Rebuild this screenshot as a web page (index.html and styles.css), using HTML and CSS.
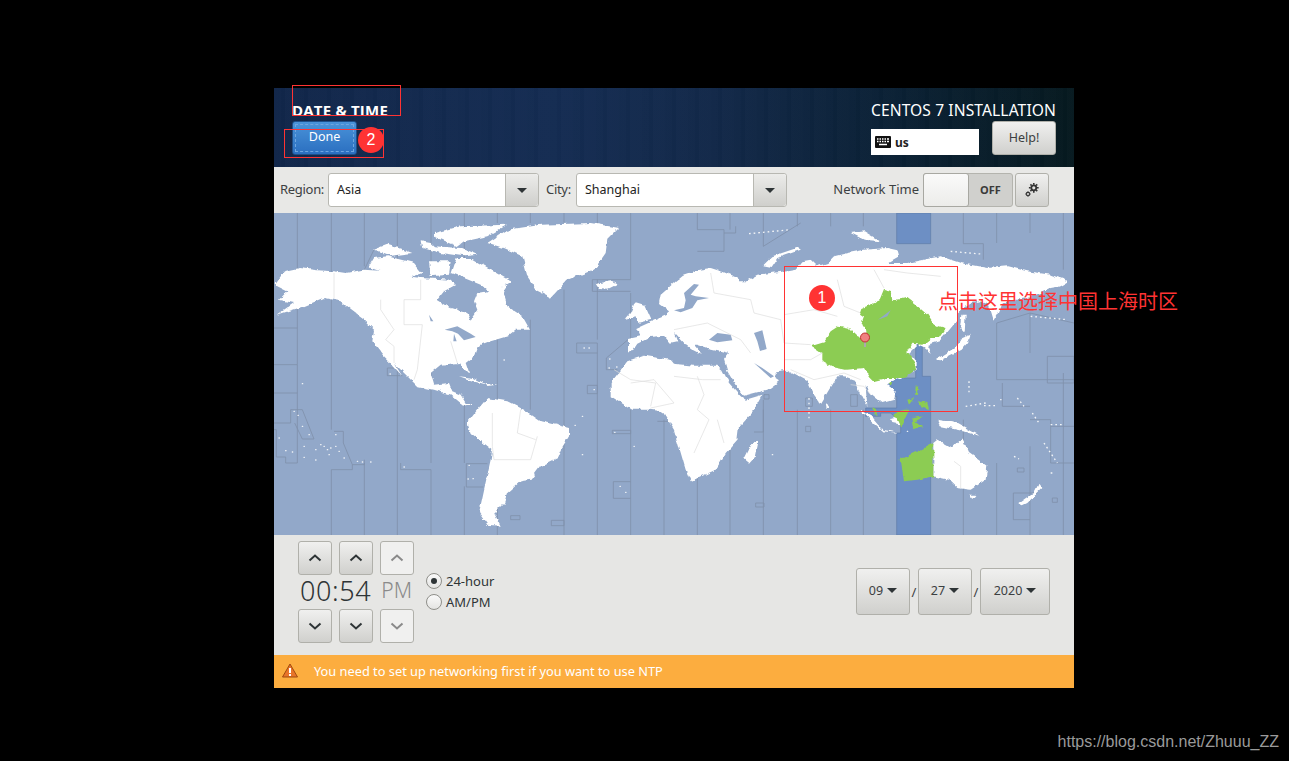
FILE: index.html
```html
<!DOCTYPE html>
<html lang="en">
<head>
<meta charset="utf-8">
<title>Date &amp; Time</title>
<link rel="stylesheet" href="styles.css">
</head>
<body>
<main class="window">
  <header class="hdr">
    <div class="hdr-left">
      <h1 class="hdr-title">DATE &amp; TIME</h1>
      <button class="done"><span class="done-inner">Done</span></button>
    </div>
    <div class="hdr-right">
      <div class="hdr-product">CENTOS 7 INSTALLATION</div>
      <div class="hdr-row">
        <div class="kbd">
          <svg class="kbd-icon" viewBox="0 0 16 12"><rect width="16" height="12" rx="1" fill="#111"/><path d="M2 3h1.500M4.500 3H6M7 3h1.500M9.500 3H11M12 3h2M2 5.500h1.500M4.500 5.500H6M7 5.500h1.500M9.500 5.500H11M12 5.500h2M4 8.500h8" stroke="#fff" stroke-width="1.300" fill="none"/></svg>
          <span>us</span>
        </div>
        <button class="btn help">Help!</button>
      </div>
    </div>
  </header>

  <section class="toolbar">
    <label class="lbl lbl-region">Region:</label>
    <div class="combo"><span class="combo-val">Asia</span><span class="combo-arrow"><i class="tri"></i></span></div>
    <label class="lbl lbl-city">City:</label>
    <div class="combo"><span class="combo-val">Shanghai</span><span class="combo-arrow"><i class="tri"></i></span></div>
    <div class="ntp">
      <span class="lbl">Network Time</span>
      <div class="switch"><span class="knob"></span><span class="off">OFF</span></div>
      <button class="btn gear">
        <svg viewBox="0 0 18 18" width="16" height="16"><g fill="none" stroke="#333"><circle cx="11" cy="6.500" r="2.800" stroke-width="2"/><path d="M11 1v2M11 10v2M5.500 6.500h2M14.500 6.500h2M7.200 2.700l1.300 1.300M13.600 9l1.300 1.300M7.200 10.300L8.500 9M13.600 4l1.300-1.300" stroke-width="1.800"/><circle cx="4.500" cy="13.500" r="1.800" stroke-width="1.200"/><path d="M4.500 10.200v1M4.500 15.800v1M1.200 13.500h1M6.800 13.500h1M2.200 11.200l.7.700M6.100 15.100l.7.700M2.200 15.800l.7-.7M6.100 11.900l.7-.7" stroke-width="1"/></g></svg>
      </button>
    </div>
  </section>

  <section class="map">
    <svg class="map-svg" viewBox="0 0 2400 966">
      <defs>
        <filter id="rough" x="-2%" y="-2%" width="104%" height="104%">
          <feTurbulence type="fractalNoise" baseFrequency=".045" numOctaves="3" seed="4"/>
          <feDisplacementMap in="SourceGraphic" scale="14" xChannelSelector="R" yChannelSelector="G"/>
        </filter>
      </defs>
      <rect width="2400" height="966" fill="#92a8c9"/>
      <path class="band" d="M1868 0H1970V92H1868ZM1925 395H1945V490H1970V966H1868V660H1880V630L1850 600H1820V610H1775V585H1868V550H1840V495H1925Z"/>
      <path class="tz" d="M70 0V345M70 455V540M70 630V650M172 0V180M172 260V650M172 770V966M271 0V160M271 750V966M370 0V966M471 0V750M471 770V966M571 0V140M571 570V750M571 820V966M670 0V30M670 360V560M670 820V966M769 0V30M769 320V590M870 0V30M870 230V966M970 0V30M970 200V380M970 420V966M1070 0V200M1070 240V400M1070 590V966M1170 620V966M1270 0V50M1270 590V966M1368 0V50M1368 560V966M1468 0V100M1468 560V966M1570 0V40M1570 590V966M1670 0V40M1670 590V966M1768 0V40M1768 590V966M2068 0V92M2068 620V966M2168 0V90M2168 330V500M2168 750V966M2268 0V60M2268 300V420M2268 700V966M2368 0V170M2368 480V966"/>
      <path class="tz" d="M0 345H70V455H0M0 540H70V630M0 630H50V590H85L120 678H85L62 630M0 650H7V732H35V750H70V650M172 770H235V755H271V740M180 655H208V690L235 755M271 170L300 110M340 465H370M340 465V488H385M380 750V770H471M577 752H640M577 752V822H628M710 908H738V920H710ZM832 922H870V938H832ZM908 390H970V420H908ZM997 435L1062 380M997 435V470H1030M940 517H970V542H940ZM955 200H1070M955 200V235H1070M1018 806H1070M1018 806V856H1070M1015 652H1070V662H1015ZM1150 625H1185"/>
      <path class="tz" d="M1270 50H1350V115H1270M1350 60H1385V40M1468 100L1580 30M2068 92H2128V140M2168 330L2268 300M2268 300L2400 330M2168 500H2400M2320 430H2400V510H2320ZM2185 510V580H2268M2268 620H2330V640H2400M2330 640V750H2400M2290 840L2218 840V920H2268M1440 657H1468V590M1595 555V580H1615V555ZM1595 640V656H1610V640ZM1730 545H1750V580H1730ZM1445 870H1470V882H1445ZM2230 765H2250V777H2230ZM2335 855H2350V868H2335ZM1470 545H1485V558H1470Z"/>

      <g class="land" filter="url(#rough)">
        <path d="M5 210 30 175 75 165 130 172 180 175 215 180 270 170 340 175 400 190 440 195 530 200 545 215 510 235 490 260 530 285 580 300 590 320 610 290 600 265 610 240 640 235 700 215 690 245 700 280 745 310 768 350 725 350 700 370 650 385 610 400 600 430 575 450 585 480 570 475 555 450 500 455 470 480 480 515 525 510 535 535 560 545 575 570 600 570 570 578 530 545 480 530 430 520 400 490 360 450 385 490 345 445 330 430 295 385 300 350 270 320 230 290 200 265 150 255 90 280 10 305 60 270 15 260 40 235 10 220Z"/>
        <path d="M545 135 590 135 640 165 710 205 680 225 650 240 620 215 570 195 530 180ZM285 160 300 135 340 130 420 150 445 180 400 195 350 185 290 165ZM300 110 340 95 390 110 415 120 350 128ZM480 60 560 40 700 35 640 70 570 85 550 100 480 70ZM440 85 470 90 480 100 560 105 610 125 570 130 500 120 445 105ZM465 145 530 145 525 185 470 190Z"/>
        <path d="M640 90 700 50 800 35 950 30 1035 45 1000 80 995 120 960 170 880 200 830 255 790 235 760 190 745 130 690 105Z"/>
        <path d="M965 212 1010 205 1030 215 1000 230 975 228ZM1055 318 1075 295 1085 268 1110 275 1130 320 1090 330 1085 310ZM555 490 600 495 640 515 600 505ZM635 512 670 518 640 522Z"/>
        <path d="M580 630 610 590 640 555 700 565 750 590 800 625 885 645 885 670 860 710 850 735 800 760 770 800 740 805 700 840 690 870 660 900 680 938 640 935 615 900 630 830 650 740 655 710 590 660Z"/>
        <g class="east">
          <path d="M-140 445-90 428-10 440 0 452 60 458 130 458 145 470 165 510 200 550 215 560 265 545 240 590 195 640 190 680 155 720 125 770 50 805 35 770 0 650-35 595-70 590-125 590-190 550-190 510Z"/>
          <path d="M-138 378-100 370-110 345-55 320-20 305-10 296-45 270-40 245 0 210 30 185 75 170 110 165 150 178 190 195 195 205 215 205 250 185 290 180 340 175 365 170 385 145 410 140 430 160 460 150 480 130 520 120 570 110 640 105 670 112 675 130 640 150 700 150 800 130 830 140 860 150 940 165 1000 160 1060 175 1130 185 1185 205 1160 220 1130 225 1100 240 1060 255 1000 265 985 275 975 300 960 325 945 275 920 265 890 270 860 290 850 300 850 320 835 340 810 370 795 385 760 395 770 420 752 405 730 395 705 420 725 445 725 470 680 495 650 505 640 515 665 535 660 560 625 570 595 545 575 520 580 580 565 555 550 525 540 500 510 490 490 490 465 530 440 572 420 545 400 505 395 500 340 470 310 475 300 495 315 505 280 530 210 548 190 525 160 475 150 440 165 420 100 405 70 395 60 395 85 425 55 410 30 392 0 360 10 388-10 392-30 368-70 372-110 392-125 415-138 415Z"/>
          <path d="M265 160 295 130 375 103 380 110 310 135 290 165ZM530 60 570 55 620 85 570 80ZM452 570 465 580 455 585ZM210 740 235 690 255 680 245 730 225 752ZM555 590 590 610 625 650 680 660 625 655 585 620ZM645 615 680 610 680 635 655 630ZM790 620 850 630 920 670 870 655 800 640ZM778 690 790 680 835 705 865 675 885 720 940 760 935 800 890 830 850 825 825 800 778 790ZM885 845 905 845 895 858ZM1030 875 1080 840 1095 810 1105 825 1060 870 1040 880ZM785 440 850 400 865 375 890 365 885 380 860 410 800 442ZM858 345 862 305 875 305 872 360Z"/>
        </g>
      </g>
      <path class="sea" d="M465 305 478 325 470 325ZM512 350 550 340 590 362 605 372 570 382 552 362 535 355ZM540 362 548 385 538 385Z"/>
      <g class="east">
        <path class="sea" d="M0 292 30 285 35 262 30 240 60 213 75 215 50 245 65 250 105 255 70 262 55 285 20 298ZM105 380 130 360 170 365 175 382 130 388ZM240 360 265 352 278 408 258 414 250 385ZM240 450 265 465 300 490 290 495Z"/>
        <g class="green" filter="url(#rough)">
          <path d="M410 397 450 385 470 355 495 338 525 345 545 365 560 372 578 355 565 335 572 315 558 305 565 285 615 265 630 228 650 235 655 262 700 255 720 270 760 305 780 335 815 345 795 375 770 375 745 395 715 392 700 420 725 445 725 470 690 495 640 495 600 505 585 490 570 465 515 470 475 462 445 445 445 420Z"/>
          <path d="M778 690 740 710 680 738 690 805 730 800 778 790ZM722 522 733 520 728 545 720 545ZM735 565 760 570 765 588 742 580ZM700 560 720 555 705 575ZM655 605 690 590 708 590 690 625 680 645 665 612ZM715 615 750 610 725 625 745 640 720 645ZM590 585 605 590 612 610ZM645 510 655 505 650 520Z"/>
        </g>
        <path class="sea" d="M612 320 650 292 640 310Z"/>
        <path class="tzb" d="M70 490 90 545 70 590 105 620 60 720M0 490 85 500 140 500M-130 510-60 500 0 570-70 585M130 620 150 690M330 305 420 290 490 310M600 170 630 225M490 200 510 280 560 300M110 180 120 240 230 260 240 300 320 320 330 390 410 395M0 350 100 330 200 380 230 420M330 440 410 440 445 420M350 470 420 500 510 480 560 500M530 515 570 520 590 545M840 745 860 760V825M630 170 700 180 800 190"/>
      </g>
      <path class="tzb" d="M655 600V700L660 740H770L790 670M740 590 730 660 785 680M530 385 550 450M180 180V255M320 260V290L360 350 335 380 360 400 360 450M440 200V260H390V335H445L430 470 420 500M1020 470 1070 500 1145 510 1130 580"/>
      <g class="dots">
        <path d="M60 595h1M72 607h1M85 640h1M105 665h1M15 675h1M35 713h1M55 717h1M90 700h1M90 733h1M125 710h1M125 741h1M140 695h1M150 700h1M160 710h1M170 705h1M185 700h1M185 665h1M195 715h1M210 735h1M165 725h1M250 745h1M265 747h1M290 747h1M85 512h1M348 483h1M390 762h1M585 757h1M582 798h1M597 797h1M690 441h1M925 610h1M903 637h1M925 725h1M1080 700h1M1022 658h1M1038 820h1M1055 838h1M1007 438h1M1005 465h1M1028 462h1M930 405h1M945 405h1M960 530h1M1495 725h1M1900 655h1M2180 560h1"/>
      </g>
      <path class="chain" d="M2085 505v35M2075 580l60-10M2130 578h40M2230 555l20 25M2275 600l20 30M2330 635h40M2310 690l40 60M2330 780h10M2220 730l15 8M1605 555v65M1425 62 1550 50M2030 115l90 8M2270 310l110 10"/>
    </svg>
    <svg class="pin" viewBox="0 0 12 16" width="12" height="16"><rect x="5" y="9" width="2" height="6" fill="#aaa"/><circle cx="6" cy="5.500" r="4.500" fill="#f08080" stroke="#c03030"/></svg>
  </section>

  <section class="bottom">
    <div class="clock">
      <div class="spins">
        <button class="btn spin"><svg class="chev" viewBox="0 0 14 8"><path d="M1.500 6.500L7 1.500l5.500 5"/></svg></button>
        <button class="btn spin"><svg class="chev" viewBox="0 0 14 8"><path d="M1.500 6.500L7 1.500l5.500 5"/></svg></button>
        <button class="btn spin off-btn"><svg class="chev muted" viewBox="0 0 14 8"><path d="M1.500 6.500L7 1.500l5.500 5"/></svg></button>
      </div>
      <div class="time"><span class="digits">00:54</span><span class="ampm">PM</span></div>
      <div class="spins">
        <button class="btn spin"><svg class="chev" viewBox="0 0 14 8"><path d="M1.500 1.500L7 6.500l5.500-5"/></svg></button>
        <button class="btn spin"><svg class="chev" viewBox="0 0 14 8"><path d="M1.500 1.500L7 6.500l5.500-5"/></svg></button>
        <button class="btn spin off-btn"><svg class="chev muted" viewBox="0 0 14 8"><path d="M1.500 1.500L7 6.500l5.500-5"/></svg></button>
      </div>
    </div>
    <div class="radios">
      <div class="radio-row"><span class="radio on"></span><span>24-hour</span></div>
      <div class="radio-row"><span class="radio"></span><span>AM/PM</span></div>
    </div>
    <div class="date">
      <button class="btn dbtn">09<i class="tri"></i></button><span class="slash">/</span>
      <button class="btn dbtn">27<i class="tri"></i></button><span class="slash">/</span>
      <button class="btn dbtn year">2020<i class="tri"></i></button>
    </div>
  </section>

  <footer class="warn">
    <svg class="warn-icon" viewBox="0 0 16 15" width="16" height="15"><path d="M8 1L15.500 14H.5Z" fill="#e8742a" stroke="#a04a10" stroke-linejoin="round"/><rect x="7" y="5" width="2" height="5" fill="#fff"/><rect x="7" y="11" width="2" height="2" fill="#fff"/></svg>
    <span>You need to set up networking first if you want to use NTP</span>
  </footer>
</main>

<div class="mark mark-title"></div>
<div class="mark mark-done"></div>
<div class="mark mark-map"></div>
<div class="badge badge-1">1</div>
<div class="badge badge-2">2</div>
<div class="note">点击这里选择中国上海时区</div>
<div class="credit">https://blog.csdn.net/Zhuuu_ZZ</div>
</body>
</html>
```
FILE: styles.css
```css
* { box-sizing: border-box; }
html, body { margin: 0; height: 100%; }
body {
  position: relative;
  background: #000;
  overflow: hidden;
  font-family: "Noto Sans", "Open Sans", sans-serif;
  font-size: 13px;
  color: #2e3436;
}
button { font: inherit; color: inherit; padding: 0; }

.window {
  width: 800px;
  height: 600px;
  margin: 88px 0 0 274px;
  display: flex;
  flex-direction: column;
  background: #e6e6e4;
}

/* header */
.hdr {
  height: 79px;
  flex: none;
  display: flex;
  justify-content: space-between;
  padding: 13px 18px 0;
  color: #fff;
  background:
    repeating-linear-gradient(90deg, rgba(255,255,255,.006) 0 7px, rgba(0,0,0,.012) 7px 11px, rgba(255,255,255,.01) 11px 23px),
    linear-gradient(90deg, #11264a 0%, #142c52 35%, #122849 55%, #0a2034 78%, #06191f 100%);
}
.hdr-left { display: flex; flex-direction: column; }
.hdr-title {
  margin: 0 0 2px;
  font: 700 15px/18px "Open Sans", "Noto Sans", sans-serif;
  letter-spacing: .2px;
  color: #fff;
}
.done {
  width: 65px;
  height: 34px;
  padding: 2px;
  border: 1px solid #1d4f8a;
  border-radius: 3px;
  color: #fff;
  background: linear-gradient(#4a93d9, #2b6fc0);
}
.done-inner {
  display: block;
  height: 100%;
  line-height: 24px;
  border: 1px dashed #6ea6e0;
  font-size: 12.5px;
}
.hdr-right { display: flex; flex-direction: column; align-items: flex-end; }
.hdr-product { font-size: 15.6px; line-height: 18px; letter-spacing: .1px; white-space: nowrap; }
.hdr-row { display: flex; align-items: flex-end; gap: 13px; margin-top: 2px; height: 34px; }
.kbd {
  width: 108px;
  height: 26px;
  background: #fff;
  color: #222;
  display: flex;
  align-items: center;
  gap: 4px;
  padding-left: 4px;
  font-weight: 700;
  font-size: 12px;
}
.kbd-icon { width: 16px; height: 12px; }

.btn {
  border: 1px solid #b0b0aa;
  border-radius: 3px;
  background: linear-gradient(#f0f0ef, #d0d0cd);
  color: #2e3436;
  display: flex;
  align-items: center;
  justify-content: center;
}
.help { width: 64px; height: 34px; color: #3b3f40; font-size: 12.5px; padding-bottom: 2px; }

/* toolbar */
.toolbar {
  height: 46px;
  flex: none;
  display: flex;
  align-items: center;
  padding: 0 25px 0 6px;
  background: #e8e8e6;
}
.lbl { color: #3c4042; white-space: nowrap; }
.lbl-region { width: 44px; letter-spacing: -.3px; padding-bottom: 2px; }
.lbl-city { width: 26px; letter-spacing: -.3px; padding-bottom: 2px; }
.combo {
  width: 211px;
  height: 34px;
  margin: 0 7px 0 4px;
  display: flex;
  border: 1px solid #b8b8b2;
  border-radius: 3px;
  background: #fff;
}
.combo-val { flex: 1; padding-left: 8px; line-height: 32px; color: #222; font-size: 12.5px; }
.combo-arrow {
  width: 33px;
  display: flex;
  align-items: center;
  justify-content: center;
  border-left: 1px solid #b8b8b2;
  background: linear-gradient(#ececea, #cfcfcc);
  border-radius: 0 3px 3px 0;
}
.tri {
  display: inline-block;
  width: 0;
  height: 0;
  border-left: 5px solid transparent;
  border-right: 5px solid transparent;
  border-top: 5px solid #2e3436;
}
.ntp { margin-left: auto; display: flex; align-items: center; }
.ntp .lbl { line-height: 32px; align-self: flex-start; }
.switch {
  width: 90px;
  height: 34px;
  margin-left: 4px;
  display: flex;
  border: 1px solid #b4b4ae;
  border-radius: 3px;
  background: #d0d0cd;
}
.knob {
  width: 46px;
  margin: -1px 0 -1px -1px;
  border: 1px solid #a8a8a2;
  border-radius: 3px;
  background: linear-gradient(#fafafa, #ececea);
}
.off { flex: 1; text-align: center; line-height: 32px; font-size: 11px; font-weight: 700; color: #3a3a3a; }
.gear { width: 34px; height: 34px; margin-left: 2px; }

/* map */
.map { position: relative; height: 322px; flex: none; overflow: hidden; }
.map-svg { display: block; width: 800px; height: 322px; }
.east { transform: translateX(1200px); }
.band { fill: #6d8fc4; stroke: #5f7ba8; stroke-width: 2; }
.tz { fill: none; stroke: #7f90ab; stroke-width: 2.5; }
.land { fill: #fff; }
.green { fill: #8ccc52; }
.sea { fill: #92a8c9; }
.tzb { fill: none; stroke: #dcdcdc; stroke-width: 2; }
.dots { fill: none; stroke: #f4f6f8; stroke-width: 4; stroke-linecap: round; }
.chain { fill: none; stroke: #f4f6f8; stroke-width: 4; stroke-dasharray: 5 9; }
.pin { position: absolute; left: 585px; top: 119px; }

/* bottom */
.bottom {
  height: 120px;
  flex: none;
  display: flex;
  padding: 6px 24px 0;
  background: #e6e6e4;
}
.clock { width: 116px; display: flex; flex-direction: column; }
.spins { display: flex; gap: 7px; }
.spin { width: 34px; height: 34px; }
.off-btn { background: #f0f0ef; }
.chev { width: 14px; height: 8px; fill: none; stroke: #2e3436; stroke-width: 2; }
.muted { stroke: #8a8a8a; }
.time { height: 34px; display: flex; align-items: center; white-space: nowrap; padding-bottom: 4px; }
.digits { font-size: 27px; font-weight: 300; letter-spacing: .6px; margin-left: 2px; color: #2e3436; }
.ampm { font-size: 21px; font-weight: 300; color: #8a8a8a; margin-left: 10px; }
.radios { margin: 31px 0 0 12px; display: flex; flex-direction: column; gap: 3px; }
.radio-row { display: flex; align-items: center; gap: 4px; height: 18px; white-space: nowrap; }
.radio {
  width: 16px;
  height: 16px;
  border-radius: 50%;
  border: 1px solid #8f8f8a;
  background: linear-gradient(#fafafa, #e4e4e2);
  flex: none;
  position: relative;
}
.radio.on::after {
  content: "";
  position: absolute;
  left: 4px;
  top: 4px;
  width: 6px;
  height: 6px;
  border-radius: 50%;
  background: #2e3436;
}
.date { margin: 27px 0 0 auto; height: 47px; display: flex; align-items: center; }
.dbtn { width: 54px; height: 47px; gap: 4px; color: #3c4042; padding-bottom: 2px; font-size: 12.5px; }
.year { width: 70px; }
.slash { width: 8px; text-align: center; color: #3c4042; }

/* warning */
.warn {
  height: 33px;
  flex: none;
  display: flex;
  align-items: center;
  gap: 16px;
  padding: 0 0 2px 8px;
  background: #fcad3f;
  color: #fff;
  font-size: 12.8px;
}

/* annotations drawn on top of the screenshot */
.mark { position: absolute; border: 1px solid #f33; }
.mark-title { left: 292px; top: 85px; width: 109px; height: 31px; }
.mark-done { left: 284px; top: 129px; width: 100px; height: 29px; }
.mark-map { left: 784px; top: 266px; width: 174px; height: 146px; }
.badge {
  position: absolute;
  width: 26px;
  height: 26px;
  border-radius: 50%;
  background: #f33;
  color: #fff;
  text-align: center;
  font: 16px/26px "Liberation Sans", sans-serif;
}
.badge-1 { left: 809px; top: 285px; }
.badge-2 { left: 358px; top: 127px; }
.note {
  position: absolute;
  left: 938px;
  top: 288px;
  color: #f33;
  font: 20px/26px "Noto Sans CJK SC", sans-serif;
  white-space: nowrap;
}
.credit {
  position: absolute;
  right: 10px;
  top: 732px;
  color: #9a9a9a;
  font: 16px/20px "Liberation Sans", sans-serif;
  white-space: nowrap;
}
```
